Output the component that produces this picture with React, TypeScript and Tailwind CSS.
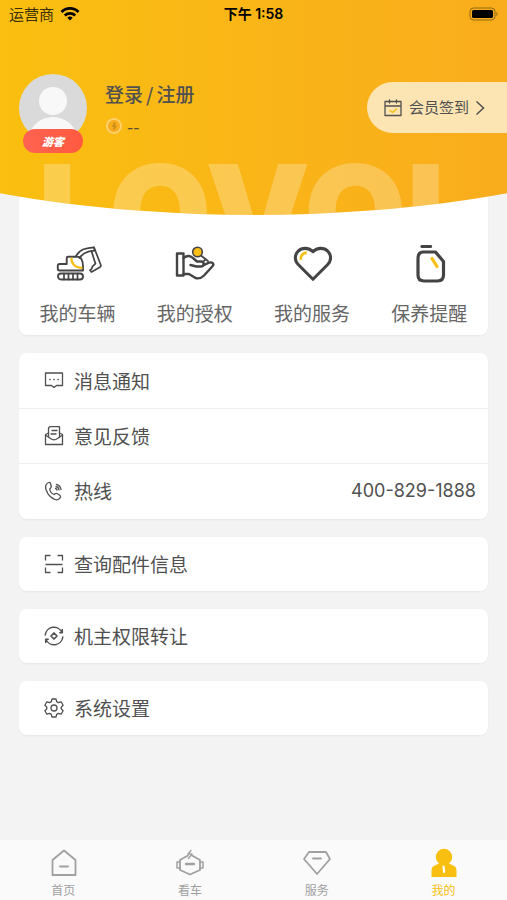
import type { ReactNode } from 'react';

type IconProps = { children: ReactNode; className?: string; box?: string };

function Icon({ children, className = 'size-5', box = '0 0 20 20' }: IconProps) {
  return (
    <svg
      viewBox={box}
      className={className}
      fill="none"
      stroke="currentColor"
      strokeWidth="1.3"
      strokeLinecap="round"
      strokeLinejoin="round"
      aria-hidden="true"
    >
      {children}
    </svg>
  );
}

const shortcuts = [
  {
    label: '我的车辆',
    icon: (
      <Icon box="0 0 48 40" className="h-10 w-12">
        <rect x="4" y="28.500" width="25" height="6" rx="3" strokeWidth="1.900" />
        <path d="M10 28.500v6M14.500 28.500v6M19 28.500v6M23.500 28.500v6" strokeWidth="1.700" />
        <path d="M5.500 25.500H29v-4c0-6-2-9.800-5.500-9.800H14c-1 0-1.300.5-1.300 1.300v6H5.500c-1.200 0-1.700.8-1.700 1.800v3c0 1 .5 1.700 1.700 1.700z" strokeWidth="1.900" />
        <path d="M17.500 12.500c-.5 6 3 10 11 10.500" stroke="#f9bf16" strokeWidth="2.200" strokeLinecap="butt" />
        <path d="M22 11c2-3.500 4.500-5.500 7.500-6.700C33 3 36 2.500 40 2.300l.6 3.400c-3.500.3-6.800.9-9.600 2.300-2.500 1.300-4 2.800-5.500 5" strokeWidth="1.700" />
        <path d="M40 2.300L46.800 20c.4 1-.1 1.700-1 2.200L37.500 27l-1.500-1.800c1.800-1 2.300-2 2.300-3.500l3.200-3L37.500 6.300" strokeWidth="1.700" />
      </Icon>
    ),
  },
  {
    label: '我的授权',
    icon: (
      <Icon box="0 0 40 40" className="size-10">
        <rect x="2" y="8.500" width="6.500" height="22" strokeWidth="2.400" />
        <path
          d="M8.500 13c4-3 7-2.500 10 .5l3.500 3H26c3.500 0 3.500 5 0 5h-4.500l-6-1.500M28 20.500l6-2.800c3.500-1.200 5.500 1.500 3.500 3.500L29 30.500c-2.500 2.500-5.500 3.500-8.500 2.500L14 29H8.500"
          strokeWidth="2.400"
        />
        <path d="M26.500 11l6.500 5M30.500 14l-1.500 1.800" strokeWidth="1.800" />
        <circle cx="22.500" cy="7" r="4.800" fill="#f9bf16" strokeWidth="1.600" />
      </Icon>
    ),
  },
  {
    label: '我的服务',
    icon: (
      <Icon box="-2 0 42 42" className="size-10">
        <path
          d="M20 36L4.500 20.500c-4-4-4-10 0-14 4-4 11-4 15.500.5 4.500-4.500 11.500-4.500 15.500-.5 4 4 4 10 0 14z"
          strokeWidth="3.200"
        />
        <path d="M7 15.500c0-4.500 2.500-7 6.500-7.500" stroke="#f9bf16" strokeWidth="2.800" strokeLinecap="butt" />
      </Icon>
    ),
  },
  {
    label: '保养提醒',
    icon: (
      <Icon box="-2 1 40 40" className="size-10">
        <path d="M11 2.500h8.500" strokeWidth="3.200" />
        <path
          d="M12 8h12.500l8 9.500V31c0 4-2 6-6 6H13c-4 0-6-2-6-6V15c0-4 1-7 5-7z"
          strokeWidth="3.200"
        />
        <path d="M21 14.500l5 8" stroke="#f9bf16" strokeWidth="3.200" />
      </Icon>
    ),
  },
];

const messageRows = [
  {
    label: '消息通知',
    icon: (
      <Icon>
        <path d="M1.500 2h17v12.500h-6L10 16.500l-2.500-2h-6z" />
        <path d="M5.800 8.500h.2M9.900 8.500h.2M14 8.500h.2" strokeWidth="1.600" />
      </Icon>
    ),
  },
  {
    label: '意见反馈',
    icon: (
      <Icon>
        <path d="M4.500 7L1.500 8.500v10h17v-10l-3-1.500" />
        <path d="M1.500 9l5 3.500c2 1.500 5 1.500 7 0l5-3.500" />
        <path d="M4.500 11V3c0-1.500.7-2.300 2-2.300h9V11M8 4.500h5M7 8h5" />
      </Icon>
    ),
  },
];

const phoneIcon = (
  <Icon>
    <path d="M5 1.500c-3 1-4 3.500-3 7 1.500 4.500 5 8.500 9 10 2 .8 4.500 0 5.500-2.500.3-1-.3-1.500-1-2l-2.500-1.500c-1.500-.7-2 .5-3 1-2-.8-4-3.500-4.300-5.500.5-.7 1.800-1.200 1.600-2.500L6.500 2.500c-.3-.7-.8-1.200-1.500-1z" />
    <path d="M11.500 7.500c.8.200 1.300.7 1.500 1.500M12 5.500c1.500.3 2.700 1.500 3 3.300M12.500 3.500c2.500.5 4 2.200 4.500 5" />
  </Icon>
);

const serviceRows = [
  {
    label: '查询配件信息',
    icon: (
      <Icon>
        <path d="M1.500 6.500v-5h5M13.500 1.500h5v5M1.500 13.500v5h5M13.500 18.500h5v-5M1.500 10.500h17" strokeLinecap="butt" />
      </Icon>
    ),
  },
  {
    label: '机主权限转让',
    icon: (
      <Icon>
        <path d="M1.200 9A8.800 8.800 0 0 1 18 6.500M18.300 3.500v3.300h-2.500M18.800 11A8.800 8.800 0 0 1 2 13.500M1.700 16.500v-3.300h2.500" strokeWidth="1.500" />
        <path d="M10 7l3 3-3 3-3-3z" strokeWidth="1.700" />
      </Icon>
    ),
  },
  {
    label: '系统设置',
    icon: (
      <Icon>
        <path d="M8 1h4l.7 2.600 1.800 1 2.600-.8 2 3.500-1.900 1.900v1.600l1.900 1.900-2 3.500-2.600-.8-1.800 1L12 19H8l-.7-2.600-1.800-1-2.600.8-2-3.500 1.900-1.900V9.200L.9 7.300l2-3.500 2.600.8 1.800-1z" />
        <circle cx="10" cy="10" r="3" />
      </Icon>
    ),
  },
];

const tabs = [
  {
    label: '首页',
    icon: (
      <Icon box="0 0 30 30" className="size-[30px]">
        <path d="M4.500 12L16 2.500 27.500 12v15h-23zM12 18.500h8" strokeWidth="1.800" />
      </Icon>
    ),
  },
  {
    label: '看车',
    icon: (
      <Icon box="0 0 30 30" className="size-[30px]">
        <path d="M13 7.500L5 12v10l10 4.500L25 22V12l-8-4.500" strokeWidth="1.800" />
        <path d="M5 14H2v6h3M25 14h3v6h-3" strokeWidth="1.500" />
        <path d="M16 2.500l-3 3.500h4l-3.500 4.500" strokeWidth="1.400" />
        <path d="M11 16h8" strokeWidth="2.400" />
      </Icon>
    ),
  },
  {
    label: '服务',
    icon: (
      <Icon box="0 0 30 30" className="size-[30px]">
        <path d="M7 4h17l4 7-13 15L2 11z" strokeWidth="1.800" />
        <path d="M11 10.500h8" strokeWidth="1.800" />
      </Icon>
    ),
  },
  {
    label: '我的',
    active: true,
    icon: (
      <Icon box="0 0 30 30" className="size-[30px]">
        <circle cx="15" cy="9" r="8.200" fill="currentColor" stroke="none" />
        <path d="M11 15h8l6 3c2 1 2.500 2.500 2.500 4.500V29h-25v-6.500C2.500 20.500 3 19 5 18z" fill="currentColor" stroke="none" />
        <path d="M14.500 18.500l.7 5.500" stroke="#fff" strokeWidth="2.200" />
      </Icon>
    ),
  },
];

function MenuRow({ icon, label, extra }: { icon: ReactNode; label: string; extra?: ReactNode }) {
  return (
    <div className="flex items-center py-[13px] pr-3 pl-[25px]">
      <button type="button" className="flex flex-1 items-center gap-2.5 text-left">
        {icon}
        <span>{label}</span>
      </button>
      {extra}
    </div>
  );
}

export default function App() {
  return (
    <div className="flex min-h-screen flex-col bg-[#f3f3f3] font-['Noto_Sans_CJK_SC',sans-serif] text-[#505050]">
      <header className="relative z-10 h-[215px] overflow-hidden bg-linear-to-r from-[#fabf10] to-[#f9ac1c] [clip-path:ellipse(114%_100%_at_50%_0)]">
        {/* brand watermark, runs off the curved edge */}
        <div
          aria-hidden="true"
          className="absolute top-[164px] left-[38px] font-['Inter',sans-serif] text-[132px] leading-[96px] font-black text-white/25"
        >
          LOVOL
        </div>

        <div className="relative grid h-7 grid-cols-3 items-center px-[9px] text-sm text-black">
          <div className="flex items-center gap-1.5 text-[15px] text-[#3b2f08]">
            运营商
            <svg viewBox="0 0 20 14" className="h-3.5 w-5" fill="none" stroke="#000" strokeWidth="2.800" aria-hidden="true">
              <path d="M1.500 5a12 12 0 0 1 17 0M4.800 8.400a7.500 7.500 0 0 1 10.400 0" />
              <path d="M10 13.500L7.300 10.800a4 4 0 0 1 5.400 0z" fill="#000" stroke="none" />
            </svg>
          </div>
          <div className="text-center font-['Inter','Noto_Sans_CJK_SC',sans-serif] font-semibold">下午 1:58</div>
          <svg viewBox="0 0 30 14" className="h-3.5 w-[30px] justify-self-end" aria-hidden="true">
            <rect x="2" y="1" width="25" height="12" rx="3.500" fill="none" stroke="#8a6a10" />
            <rect x="4" y="3" width="21" height="8" rx="1.500" fill="#000" />
            <path d="M28.300 5c1.500.5 1.500 3.500 0 4z" fill="#8a6a10" />
          </svg>
        </div>

        <div className="relative flex items-start pt-[46px] pl-[19px]">
          <div className="relative h-[79px] w-[68px]">
            <svg viewBox="0 0 68 68" className="size-[68px] rounded-full bg-[#dadada]" fill="#f8f8f8" aria-hidden="true">
              <circle cx="34" cy="27" r="14" />
              <ellipse cx="34" cy="65" rx="24" ry="22" />
            </svg>
            <span className="absolute inset-x-1 bottom-0 flex h-6 items-center justify-center rounded-full bg-linear-to-r from-[#ff6350] to-[#ff5a40] text-[11px] leading-4 font-black text-white italic">
              游客
            </span>
          </div>
          <div className="ml-[18px] flex flex-col pt-1">
            <button type="button" className="text-left text-[19px] leading-8 font-medium">
              登录<span className="mx-[3px]">/</span>注册
            </button>
            <div className="flex h-8 items-center gap-1 text-[#5c5232]">
              <svg viewBox="0 0 18 18" className="size-[18px]" aria-hidden="true">
                <circle cx="9" cy="9" r="7" fill="#f7ac1c" stroke="#fbd06a" strokeWidth="2" />
                <path d="M10 5.500L8 9.300h2.500L8.500 12.500" fill="none" stroke="#c98a1c" strokeWidth="1.500" />
              </svg>
              <span className="text-lg leading-5">--</span>
            </div>
          </div>
          <button
            type="button"
            className="mt-2 ml-auto flex h-[51px] items-center gap-1.5 rounded-l-full bg-[#fde4b3] pr-[22px] pl-4 text-[15px]"
          >
            <Icon>
              <path d="M2 3.500h16v14H2zM2 8h16M6.500 2v3M13.500 2v3" />
              <path d="M7 12.500l2.500 2 4-3.500" stroke="#f9bf16" strokeWidth="1.600" />
            </Icon>
            会员签到
            <svg viewBox="0 0 10 16" className="h-4 w-2.5" fill="none" stroke="currentColor" strokeWidth="1.500" aria-hidden="true">
              <path d="M1.500 1.500L8.500 8l-7 6.500" />
            </svg>
          </button>
        </div>
      </header>

      <main className="-mt-6 flex flex-col gap-[18px] px-[19px] text-[19px] leading-7">
        <section className="grid grid-cols-4 rounded-lg bg-white pt-[54px] pb-2 shadow-xs">
          {shortcuts.map((item) => (
            <button key={item.label} type="button" className="flex flex-col items-center gap-3.5 text-[#666]">
              <span className="text-[#444]">{item.icon}</span>
              {item.label}
            </button>
          ))}
        </section>

        <section className="divide-y divide-[#efefef] rounded-lg bg-white py-px shadow-xs">
          {messageRows.map((row) => (
            <MenuRow key={row.label} {...row} />
          ))}
          <MenuRow
            icon={phoneIcon}
            label="热线"
            extra={
              <a href="tel:400-829-1888" className="font-['Inter',sans-serif] text-lg leading-7">
                400-829-1888
              </a>
            }
          />
        </section>

        {serviceRows.map((row) => (
          <section key={row.label} className="rounded-lg bg-white shadow-xs">
            <MenuRow {...row} />
          </section>
        ))}
      </main>

      <nav className="mt-auto grid h-[60px] grid-cols-4 bg-[#fafafa]">
        {tabs.map((tab) => (
          <a
            key={tab.label}
            href="#"
            className={`flex flex-col items-center gap-1 pt-2 text-xs ${tab.active ? 'text-[#f9bf10]' : 'text-[#a0a0a0]'}`}
          >
            {tab.icon}
            {tab.label}
          </a>
        ))}
      </nav>
    </div>
  );
}
